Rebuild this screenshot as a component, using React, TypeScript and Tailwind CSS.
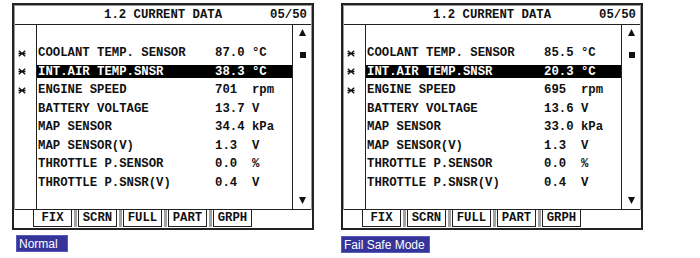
import React from 'react';

interface Row {
  label: string;
  value: string;
  mark?: boolean;
  selected?: boolean;
}

const normalRows: Row[] = [
  { label: 'COOLANT TEMP. SENSOR', value: '87.0 °C', mark: true },
  { label: 'INT.AIR TEMP.SNSR', value: '38.3 °C', mark: true, selected: true },
  { label: 'ENGINE SPEED', value: '701  rpm', mark: true },
  { label: 'BATTERY VOLTAGE', value: '13.7 V' },
  { label: 'MAP SENSOR', value: '34.4 kPa' },
  { label: 'MAP SENSOR(V)', value: '1.3  V' },
  { label: 'THROTTLE P.SENSOR', value: '0.0  %' },
  { label: 'THROTTLE P.SNSR(V)', value: '0.4  V' },
];

const failSafeRows: Row[] = [
  { label: 'COOLANT TEMP. SENSOR', value: '85.5 °C', mark: true },
  { label: 'INT.AIR TEMP.SNSR', value: '20.3 °C', mark: true, selected: true },
  { label: 'ENGINE SPEED', value: '695  rpm', mark: true },
  { label: 'BATTERY VOLTAGE', value: '13.6 V' },
  { label: 'MAP SENSOR', value: '33.0 kPa' },
  { label: 'MAP SENSOR(V)', value: '1.3  V' },
  { label: 'THROTTLE P.SENSOR', value: '0.0  %' },
  { label: 'THROTTLE P.SNSR(V)', value: '0.4  V' },
];

const buttons = ['FIX', 'SCRN', 'FULL', 'PART', 'GRPH'];

function Mark() {
  return (
    <svg width="8" height="7" viewBox="0 0 8 7" className="block">
      <path d="M0.8 0.8 L7.2 6.2 M7.2 0.8 L0.8 6.2 M0.5 3.5 H7.5" stroke="#111" strokeWidth="1.3" fill="none" />
    </svg>
  );
}

function ScanPanel({ rows }: { rows: Row[] }) {
  return (
    <div className="w-[302px] border-2 border-[#222] bg-white font-['Liberation_Mono',monospace] font-bold text-[12.3px] text-[#111] whitespace-pre">
      <div className="border-x border-t border-[#9a9a9a]">
        {/* header */}
        <div className="h-[19px] border-b border-[#222] flex items-center leading-none">
          <span className="ml-[89px]">1.2 CURRENT DATA</span>
          <span className="ml-auto mr-[4px]">05/50</span>
        </div>

        {/* body */}
        <div className="h-[185px] border-b border-[#222] flex">
          <div className="w-[22px] border-r border-[#222] pt-[19px]">
            {rows.map((r) => (
              <div key={r.label} className="h-[18.5px] flex items-center pl-[3px]">
                {r.mark && <Mark />}
              </div>
            ))}
          </div>
          <div className="flex-1 pt-[19px]">
            {rows.map((r) => (
              <div key={r.label} className="h-[18.5px] flex items-center">
                <div
                  className={
                    r.selected
                      ? 'h-[13px] w-full flex items-center bg-black text-white leading-none'
                      : 'h-[13px] w-full flex items-center leading-none'
                  }
                >
                  <span className="w-[178px] pl-[1px]">{r.label}</span>
                  <span>{r.value}</span>
                </div>
              </div>
            ))}
          </div>
          <div className="w-[19px] border-l border-[#222] flex flex-col items-center pl-[1px]">
            <svg width="7" height="7" viewBox="0 0 7 7" className="mt-[4px]">
              <path d="M3.5 0 L7 7 H0 Z" fill="#111" />
            </svg>
            <div className="w-[6px] h-[6px] bg-[#111] mt-[16px]" />
            <svg width="7" height="7" viewBox="0 0 7 7" className="mt-auto mb-[5px]">
              <path d="M0 0 H7 L3.5 7 Z" fill="#111" />
            </svg>
          </div>
        </div>
      </div>

      {/* function keys */}
      <div className="h-[18px] flex pl-[19px]">
        {buttons.map((b, i) => (
          <div key={b} className="flex">
            {i > 0 && (
              <div className="flex w-[6px] h-[17px]">
                <div className="w-[2px]" />
                <div className="w-[3px] bg-[#a3a3a3]" />
              </div>
            )}
            <div className="w-[39px] h-[17px] border-x border-b border-[#222] flex items-center justify-center leading-none">
              {b}
            </div>
          </div>
        ))}
      </div>
    </div>
  );
}

function ModeLabel({ text, width }: { text: string; width: string }) {
  return (
    <div
      className={`${width} flex h-[17px] items-center bg-[#34349a] pl-[2px] text-white text-[12px] font-['Liberation_Sans',Arial,sans-serif] leading-none border border-[#5a5ab8]`}
    >
      {text}
    </div>
  );
}

export default function App() {
  return (
    <div className="w-[700px] h-[258px] bg-white flex pt-[3px] pl-[12px]">
      <div className="flex flex-col">
        <ScanPanel rows={normalRows} />
        <div className="flex mt-[5px] ml-[4px]">
          <ModeLabel text="Normal" width="w-[52px]" />
        </div>
      </div>
      <div className="flex flex-col ml-[27px]">
        <ScanPanel rows={failSafeRows} />
        <div className="flex mt-[6px]">
          <ModeLabel text="Fail Safe Mode" width="w-[89px]" />
        </div>
      </div>
    </div>
  );
}
